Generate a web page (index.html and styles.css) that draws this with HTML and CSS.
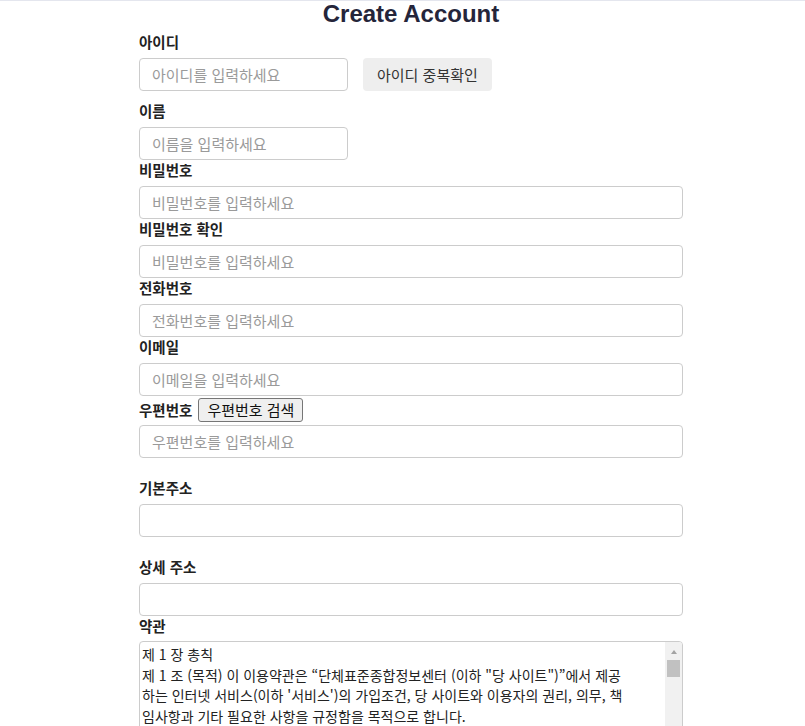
FILE: index.html
```html
<!DOCTYPE html>
<html lang="ko">
<head>
<meta charset="utf-8">
<title>Create Account</title>
<link rel="stylesheet" href="styles.css">
</head>
<body>
<main class="signup">
  <h1 class="title">Create Account</h1>

  <div class="field field-first">
    <label class="label" for="uid">아이디</label>
    <div class="row">
      <input class="input input-short" id="uid" type="text" placeholder="아이디를 입력하세요">
      <button class="btn-soft" type="button">아이디 중복확인</button>
    </div>
  </div>

  <div class="field">
    <label class="label" for="uname">이름</label>
    <input class="input input-short" id="uname" type="text" placeholder="이름을 입력하세요">
  </div>

  <div class="field">
    <label class="label" for="pw">비밀번호</label>
    <input class="input" id="pw" type="password" placeholder="비밀번호를 입력하세요">
  </div>

  <div class="field">
    <label class="label" for="pw2">비밀번호 확인</label>
    <input class="input" id="pw2" type="password" placeholder="비밀번호를 입력하세요">
  </div>

  <div class="field">
    <label class="label" for="tel">전화번호</label>
    <input class="input" id="tel" type="text" placeholder="전화번호를 입력하세요">
  </div>

  <div class="field">
    <label class="label" for="mail">이메일</label>
    <input class="input" id="mail" type="text" placeholder="이메일을 입력하세요">
  </div>

  <div class="field field-zip">
    <div class="zip-row">
      <label class="label label-inline" for="zip">우편번호</label>
      <button class="btn-default" type="button">우편번호 검색</button>
    </div>
    <input class="input" id="zip" type="text" placeholder="우편번호를 입력하세요">
  </div>

  <div class="field field-spaced">
    <label class="label" for="addr1">기본주소</label>
    <input class="input" id="addr1" type="text">
  </div>

  <div class="field field-spaced">
    <label class="label" for="addr2">상세 주소</label>
    <input class="input" id="addr2" type="text">
  </div>

  <div class="field field-terms">
    <label class="label" for="terms">약관</label>
    <div class="terms-box">
      <textarea class="terms" id="terms" readonly>제 1 장 총칙
제 1 조 (목적) 이 이용약관은 “단체표준종합정보센터 (이하 "당 사이트")”에서 제공하는 인터넷 서비스(이하 '서비스')의 가입조건, 당 사이트와 이용자의 권리, 의무, 책임사항과 기타 필요한 사항을 규정함을 목적으로 합니다.
제 2 조 (이용약관의 효력 및 변경) (1) 당 사이트에서 온라인으로 공시함으로써 효력을 발생하며, 합리적인 사유가 발생할 경우 관련법령에 위배되지 않는 범위 안에서 개정될 수 있습니다. 개정된 약관은 온라인에서 공지함으로써 효력을 발휘하며, 이용자의 권리 또는 의무 등 중요한 규정의 개정은 사전에 공지합니다.
(2) 당 사이트는 합리적인 사유가 발생될 경우에는 이 약관을 변경할 수 있으며, 약관을 변경할 경우에는 지체 없이 이를 사전에 공시합니다.
(3) 이 약관에 동의하는 것은 정기적으로 웹을 방문하여 약관의 변경사항을 확인하는 것에 동의함을 의미합니다.
제 3 조 (약관 외 준칙) 이 약관에 명시되지 않은 사항은 전기통신기본법, 전기통신사업법, 정보통신망 이용촉진 및 정보보호 등에 관한 법률 및 기타 관련 법령의 규정에 따릅니다.
제 2 장 회원 가입과 서비스 이용
제 4 조 (이용 계약의 성립) (1) 이용계약은 신청자가 온라인으로 당 사이트에서 제공하는 소정의 가입신청 양식에서 요구하는 사항을 기록하여 가입을 완료하는 것으로 성립됩니다.
(2) 당 사이트는 다음 각 호에 해당하는 이용계약에 대하여는 가입을 취소할 수 있습니다.</textarea>
      <div class="scrollbar" aria-hidden="true">
        <span class="scroll-arrow"></span>
        <span class="scroll-thumb"></span>
      </div>
    </div>
  </div>
</main>
</body>
</html>
```

FILE: styles.css
```css
html, body {
  margin: 0;
  padding: 0;
  background: #ffffff;
}

body {
  border-top: 1px solid #e4e6ee;
  font-family: "Noto Sans CJK KR", "Noto Sans", sans-serif;
  color: #222;
}

.signup {
  width: 544px;
  margin-left: 139px;
}

.title {
  margin: 0 0 5px;
  font-family: "Liberation Sans", Arial, sans-serif;
  font-size: 24px;
  line-height: 26px;
  font-weight: 700;
  text-align: center;
  color: #25253a;
}

.field {
  display: flex;
  flex-direction: column;
  align-items: flex-start;
}

.field-first {
  margin-bottom: 10px;
}

.label {
  display: block;
  font-size: 14.5px;
  line-height: 20px;
  font-weight: 700;
  color: #222;
  margin-bottom: 6px;
}

.label-inline {
  margin-bottom: 0;
}

.row {
  display: flex;
  align-items: center;
  gap: 15px;
}

.input {
  box-sizing: border-box;
  width: 544px;
  height: 33px;
  padding: 0 12px;
  border: 1px solid #cccccc;
  border-radius: 4px;
  font-family: "Noto Sans CJK KR", "Noto Sans", sans-serif;
  font-size: 15px;
  color: #333;
  background: #fff;
  outline: none;
}

.input::placeholder {
  color: #9a9a9a;
}

.input-short {
  width: 209px;
}

.btn-soft {
  box-sizing: border-box;
  height: 33px;
  padding: 0 14px;
  border: none;
  border-radius: 4px;
  background: #eeeeee;
  color: #333;
  font-family: "Noto Sans CJK KR", "Noto Sans", sans-serif;
  font-size: 15px;
}

.field-zip {
  margin-top: 2px;
}

.zip-row {
  display: flex;
  align-items: center;
  gap: 6px;
  height: 24px;
  margin-bottom: 3px;
}

.btn-default {
  box-sizing: border-box;
  height: 24px;
  padding: 0 8px;
  border: 1px solid #767676;
  border-radius: 3px;
  background: #efefef;
  color: #111;
  font-family: "Noto Sans CJK KR", "Noto Sans", sans-serif;
  font-size: 15px;
  line-height: 20px;
}

.field-spaced {
  margin-top: 20px;
}

.field-terms .label {
  margin-bottom: 5px;
}

.terms-box {
  position: relative;
  width: 544px;
}

.terms {
  display: block;
  box-sizing: border-box;
  width: 544px;
  height: 220px;
  padding: 2px 53px 2px 2px;
  border: 1px solid #cccccc;
  border-radius: 4px;
  font-family: "Noto Sans CJK KR", "Noto Sans", sans-serif;
  font-size: 14px;
  line-height: 20.5px;
  color: #222;
  resize: none;
  overflow: hidden;
  outline: none;
}

.scrollbar {
  position: absolute;
  top: 1px;
  right: 1px;
  bottom: 1px;
  width: 17px;
  background: #f1f1f1;
  border-top-right-radius: 3px;
  display: flex;
  flex-direction: column;
  align-items: center;
}

.scroll-arrow {
  width: 0;
  height: 0;
  margin-top: 8px;
  border-left: 3.5px solid transparent;
  border-right: 3.5px solid transparent;
  border-bottom: 4px solid #a3a3a3;
}

.scroll-thumb {
  width: 13px;
  height: 17px;
  margin-top: 6px;
  background: #c1c1c1;
}
```
